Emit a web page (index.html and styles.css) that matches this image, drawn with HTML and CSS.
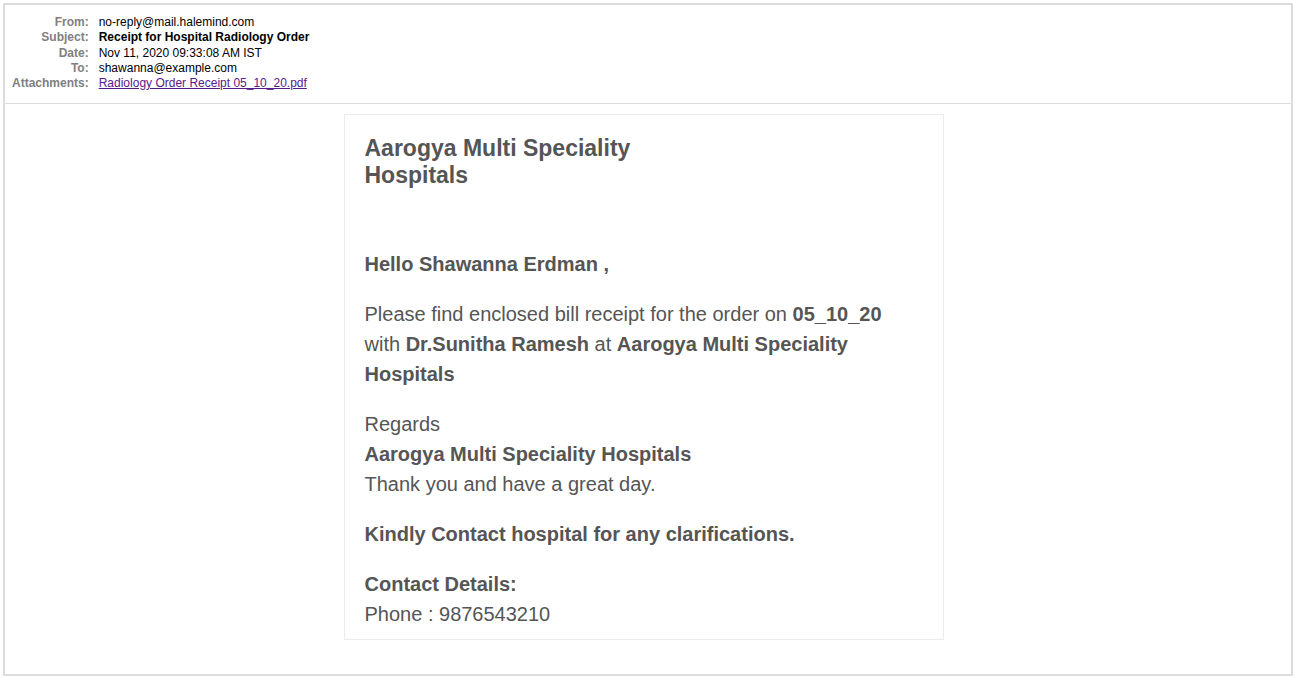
FILE: index.html
```html
<!doctype html>
<html>
	<head>
		<title>Receipt for Hospital Radiology Order</title>
		<link rel="stylesheet" href="styles.css">
	</head>
	<body>
		<div id="frame">
			<table id="headers">
				<tr><th>From:</th><td>no-reply@mail.halemind.com</td></tr>
				<tr><th>Subject:</th><td><b>Receipt for Hospital Radiology Order</b></td></tr>
				<tr><th>Date:</th><td>Nov 11, 2020 09:33:08 AM IST</td></tr>
				<tr><th>To:</th><td>shawanna@example.com</td></tr>
				<tr><th>Attachments:</th><td><a href="#">Radiology Order Receipt 05_10_20.pdf</a></td></tr>
			</table>
			<div id="message">
				<div class="card">
					<h1 class="title">Aarogya Multi Speciality<br>Hospitals</h1>
					<p class="hello"><b>Hello Shawanna Erdman ,</b></p>
					<p>Please find enclosed bill receipt for the order on <b>05_10_20</b> with <b>Dr.Sunitha Ramesh</b> at <b>Aarogya Multi Speciality Hospitals</b></p>
					<p>Regards<br><b>Aarogya Multi Speciality Hospitals</b><br>Thank you and have a great day.</p>
					<p><b>Kindly Contact hospital for any clarifications.</b></p>
					<p><b>Contact Details:</b><br>Phone : 9876543210</p>
				</div>
			</div>
		</div>
	</body>
</html>
```

FILE: styles.css
```css
body {
	margin: 3px;
	background: #fff;
	font-family: "Liberation Sans", Arial, sans-serif;
}
#frame {
	border: 2px solid #dcdcdc;
	height: 673px;
	box-sizing: border-box;
}
#headers {
	border-collapse: collapse;
	margin: 10px 0 0 7px;
	font-size: 12px;
	line-height: 15.25px;
}
#headers th {
	text-align: right;
	color: #808080;
	font-weight: bold;
	padding: 0 10px 0 0;
	vertical-align: top;
}
#headers td {
	color: #000;
	padding: 0;
}
#headers a {
	color: #551a8b;
}
#message {
	border-top: 1px solid #dcdcdc;
	margin-top: 12px;
	padding: 10px 9px 0 0;
}
.card {
	width: 600px;
	box-sizing: border-box;
	margin: 0 auto;
	border: 1px solid #ececec;
	padding: 20px 20px 10px 20px;
	color: #555;
	font-size: 20px;
	line-height: 30px;
}
.title {
	font-size: 23px;
	line-height: 27px;
	margin: 0 0 60px 0;
}
.card p {
	margin: 0 0 20px 0;
}
.card p:last-child {
	margin-bottom: 0;
}
```
